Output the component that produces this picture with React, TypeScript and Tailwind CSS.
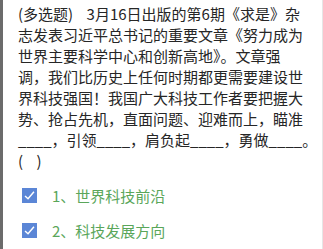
import React from 'react';

const lines = [
  '(多选题)\u00a0\u00a0\u00a0 3月16日出版的第6期《求是》杂',
  '志发表习近平总书记的重要文章《努力成为',
  '世界主要科学中心和创新高地》。文章强',
  '调，我们比历史上任何时期都更需要建设世',
  '界科技强国！我国广大科技工作者要把握大',
  '势、抢占先机，直面问题、迎难而上，瞄准',
  '____，引领____，肩负起____，勇做____。',
  '(\u00a0\u00a0\u00a0\u00a0)',
];

const options = ['1、世界科技前沿', '2、科技发展方向'];

function CheckBox() {
  return (
    <div className="flex h-[15px] w-[15px] items-center justify-center bg-[#5b86d6]">
      <svg viewBox="0 0 16 16" className="h-[13px] w-[13px]">
        <path
          d="M2.5 8.5 L6.2 12 L13.5 3.5"
          fill="none"
          stroke="white"
          strokeWidth="1.8"
        />
      </svg>
    </div>
  );
}

export default function App() {
  return (
    <div className="flex h-[249px] w-[323px] overflow-hidden bg-white">
      <div className="w-[3px] shrink-0 bg-[#6b6b6b]" />
      <div
        className="flex-1 pl-[15px] pt-[3px] text-[15px] leading-[21px] text-[#262626]"
        style={{ fontFamily: '"Noto Sans CJK SC", "Noto Sans", sans-serif' }}
      >
        {lines.map((l, i) => (
          <div key={i} className="whitespace-pre">
            {l}
          </div>
        ))}
        <div className="mt-[14px] flex flex-col gap-[14px]">
          {options.map((o) => (
            <div key={o} className="flex items-center pl-[4px]">
              <CheckBox />
              <span className="ml-[15px] text-[#5aa65a]">{o}</span>
            </div>
          ))}
        </div>
      </div>
      <div className="w-px shrink-0 bg-[#e6e6e6]" />
    </div>
  );
}
